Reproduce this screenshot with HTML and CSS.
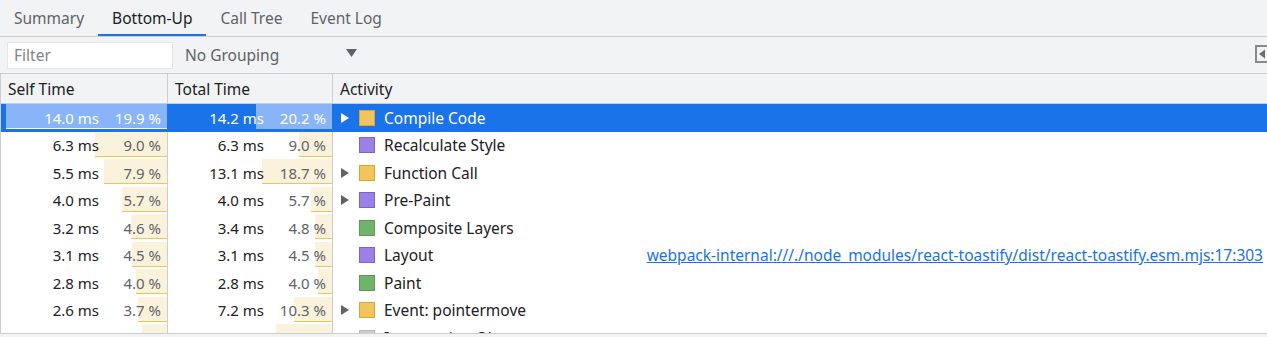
FILE: index.html
```html
<!DOCTYPE html>
<html lang="en">
<head>
    <meta charset="UTF-8">
    <title>Bottom-Up</title>
    <link rel="stylesheet" href="styles.css">
</head>
<body>
    <div class="tabs">
        <div class="tab">Summary</div>
        <div class="tab active">Bottom-Up</div>
        <div class="tab">Call Tree</div>
        <div class="tab">Event Log</div>
    </div>

    <div class="toolbar">
        <input class="filter" type="text" placeholder="Filter">
        <div class="grouping">
            <span>No Grouping</span>
            <svg class="arrow" width="11" height="8" viewBox="0 0 11 8"><path d="M0 0 H11 L5.5 8 Z" fill="#5f6368"/></svg>
        </div>
        <div class="spacer"></div>
        <svg class="sidebar-toggle" width="20" height="18" viewBox="0 0 20 18">
            <rect x="1" y="1" width="18" height="16" fill="none" stroke="#8a8a8a" stroke-width="2"/>
            <path d="M4 9 L10 4.5 L10 13.5 Z" fill="#6e6e6e"/>
        </svg>
    </div>

    <div class="grid">
        <div class="row header">
            <div class="cell">Self Time</div>
            <div class="cell">Total Time</div>
            <div class="cell">Activity</div>
        </div>

        <div class="rows">
            <div class="row selected">
                <div class="cell num"><div class="bar" style="width:161px"></div><span class="ms">14.0 ms</span><span class="pct">19.9 %</span></div>
                <div class="cell num"><div class="bar" style="width:76px"></div><span class="ms">14.2 ms</span><span class="pct">20.2 %</span></div>
                <div class="cell activity"><span class="toggle"><svg width="8" height="10" viewBox="0 0 8 10"><path d="M0 0 L8 5 L0 10 Z"/></svg></span><span class="swatch yellow"></span><span class="name">Compile Code</span></div>
            </div>
            <div class="row">
                <div class="cell num"><div class="bar" style="width:72px"></div><span class="ms">6.3 ms</span><span class="pct">9.0 %</span></div>
                <div class="cell num"><div class="bar" style="width:33px"></div><span class="ms">6.3 ms</span><span class="pct">9.0 %</span></div>
                <div class="cell activity"><span class="toggle"></span><span class="swatch purple"></span><span class="name">Recalculate Style</span></div>
            </div>
            <div class="row">
                <div class="cell num"><div class="bar" style="width:63px"></div><span class="ms">5.5 ms</span><span class="pct">7.9 %</span></div>
                <div class="cell num"><div class="bar" style="width:70px"></div><span class="ms">13.1 ms</span><span class="pct">18.7 %</span></div>
                <div class="cell activity"><span class="toggle"><svg width="8" height="10" viewBox="0 0 8 10"><path d="M0 0 L8 5 L0 10 Z"/></svg></span><span class="swatch yellow"></span><span class="name">Function Call</span></div>
            </div>
            <div class="row">
                <div class="cell num"><div class="bar" style="width:45px"></div><span class="ms">4.0 ms</span><span class="pct">5.7 %</span></div>
                <div class="cell num"><div class="bar" style="width:21px"></div><span class="ms">4.0 ms</span><span class="pct">5.7 %</span></div>
                <div class="cell activity"><span class="toggle"><svg width="8" height="10" viewBox="0 0 8 10"><path d="M0 0 L8 5 L0 10 Z"/></svg></span><span class="swatch purple"></span><span class="name">Pre-Paint</span></div>
            </div>
            <div class="row">
                <div class="cell num"><div class="bar" style="width:36px"></div><span class="ms">3.2 ms</span><span class="pct">4.6 %</span></div>
                <div class="cell num"><div class="bar" style="width:17px"></div><span class="ms">3.4 ms</span><span class="pct">4.8 %</span></div>
                <div class="cell activity"><span class="toggle"></span><span class="swatch green"></span><span class="name">Composite Layers</span></div>
            </div>
            <div class="row">
                <div class="cell num"><div class="bar" style="width:35px"></div><span class="ms">3.1 ms</span><span class="pct">4.5 %</span></div>
                <div class="cell num"><div class="bar" style="width:17px"></div><span class="ms">3.1 ms</span><span class="pct">4.5 %</span></div>
                <div class="cell activity"><span class="toggle"></span><span class="swatch purple"></span><span class="name">Layout</span>
                    <a class="source" href="#">webpack-internal:///./node_modules/react-toastify/dist/react-toastify.esm.mjs:17:303</a></div>
            </div>
            <div class="row">
                <div class="cell num"><div class="bar" style="width:31px"></div><span class="ms">2.8 ms</span><span class="pct">4.0 %</span></div>
                <div class="cell num"><div class="bar" style="width:14px"></div><span class="ms">2.8 ms</span><span class="pct">4.0 %</span></div>
                <div class="cell activity"><span class="toggle"></span><span class="swatch green"></span><span class="name">Paint</span></div>
            </div>
            <div class="row">
                <div class="cell num"><div class="bar" style="width:29px"></div><span class="ms">2.6 ms</span><span class="pct">3.7 %</span></div>
                <div class="cell num"><div class="bar" style="width:38px"></div><span class="ms">7.2 ms</span><span class="pct">10.3 %</span></div>
                <div class="cell activity"><span class="toggle"><svg width="8" height="10" viewBox="0 0 8 10"><path d="M0 0 L8 5 L0 10 Z"/></svg></span><span class="swatch yellow"></span><span class="name">Event: pointermove</span></div>
            </div>
            <div class="row">
                <div class="cell num"><div class="bar" style="width:25px"></div><span class="ms">2.2 ms</span><span class="pct">3.1 %</span></div>
                <div class="cell num"><div class="bar" style="width:56px"></div><span class="ms">10.5 ms</span><span class="pct">15.1 %</span></div>
                <div class="cell activity"><span class="toggle"><svg width="8" height="10" viewBox="0 0 8 10"><path d="M0 0 L8 5 L0 10 Z"/></svg></span><span class="swatch gray"></span><span class="name">Intersection Observer</span></div>
            </div>
        </div>
    </div>
    <div class="statusbar"></div>
</body>
</html>
```

FILE: styles.css
```css
body {
    margin: 0;
    font-family: "Noto Sans", sans-serif;
    font-size: 15.5px;
    color: #202124;
    background-color: #ffffff;
    overflow: hidden;
}
.tabs {
    display: flex;
    height: 36px;
    background-color: #f1f3f4;
    border-bottom: 1px solid #cbcdd1;
}
.tab {
    padding: 0 14px;
    line-height: 36px;
    font-size: 15.5px;
    color: #5f6368;
    box-sizing: border-box;
    height: 36px;
}
.tab.active {
    color: #202124;
    border-bottom: 2px solid #1a73e8;
}
.toolbar {
    display: flex;
    align-items: center;
    height: 36px;
    background-color: #f1f3f4;
    border-bottom: 1px solid #cbcdd1;
}
.filter {
    margin-left: 7px;
    width: 166px;
    height: 27px;
    box-sizing: border-box;
    border: 1px solid #e3e5e8;
    padding: 0 6px;
    font-family: inherit;
    font-size: 15.5px;
    color: #202124;
    background-color: #ffffff;
    outline: none;
}
.filter::placeholder {
    color: #80868b;
}
.grouping {
    display: flex;
    align-items: center;
    margin-left: 12px;
    width: 172px;
    color: #5f6368;
}
.grouping .arrow {
    margin-left: auto;
    margin-top: -4px;
}
.spacer {
    flex: 1;
}
.sidebar-toggle {
    margin-right: -8px;
    margin-top: -2px;
    flex-shrink: 0;
}
.grid {
    border-left: 1px solid #cbcdd1;
}
.row {
    display: grid;
    grid-template-columns: 167px 165px 1fr;
    height: 27.5px;
}
.cell {
    border-right: 1px solid #cbcdd1;
    display: flex;
    align-items: center;
    white-space: nowrap;
}
.cell:last-child {
    border-right: none;
}
.header {
    height: 29px;
    background-color: #f1f3f4;
    border-bottom: 1px solid #cbcdd1;
}
.header .cell {
    padding-left: 7px;
}
.rows {
    height: 229px;
    overflow: hidden;
}
.num {
    position: relative;
    justify-content: flex-end;
    padding-right: 6px;
    font-size: 15px;
}
.num .bar {
    position: absolute;
    right: 0;
    top: 0;
    height: 24px;
    background-color: #fbf2dc;
    border-bottom: 1px solid #f2c453;
}
.num .ms {
    position: relative;
    color: #202124;
}
.num .pct {
    position: relative;
    width: 62px;
    text-align: right;
    color: #5f6368;
}
.activity {
    padding-left: 8px;
    padding-right: 4px;
}
.toggle {
    width: 18px;
    display: flex;
    align-items: center;
}
.toggle svg {
    fill: #5f6368;
}
.swatch {
    width: 14px;
    height: 14px;
    border: 1px solid;
    margin-right: 9px;
}
.yellow { background-color: #f2c55c; border-color: #dca53a; }
.purple { background-color: #9b80e6; border-color: #7f62cc; }
.green { background-color: #71b36b; border-color: #5a9c55; }
.gray { background-color: #cccccc; border-color: #b8b8b8; }
.source {
    margin-left: auto;
    color: #1a73e8;
    text-decoration: underline;
}
.selected {
    background-color: #1a73e8;
}
.selected .cell {
    border-right-color: #1a73e8;
}
.selected .num .bar {
    background-color: #8ab4f8;
}
.selected .cell:first-child .bar {
    border-bottom-color: #ffffff;
}
.selected .cell:nth-child(2) .bar {
    border-bottom-color: #8ab4f8;
}
.selected .ms,
.selected .pct,
.selected .name {
    color: #ffffff;
}
.selected .toggle svg {
    fill: #ffffff;
}
.statusbar {
    height: 4px;
    border-top: 1px solid #cbcdd1;
    background-color: #f1f3f4;
}
```
